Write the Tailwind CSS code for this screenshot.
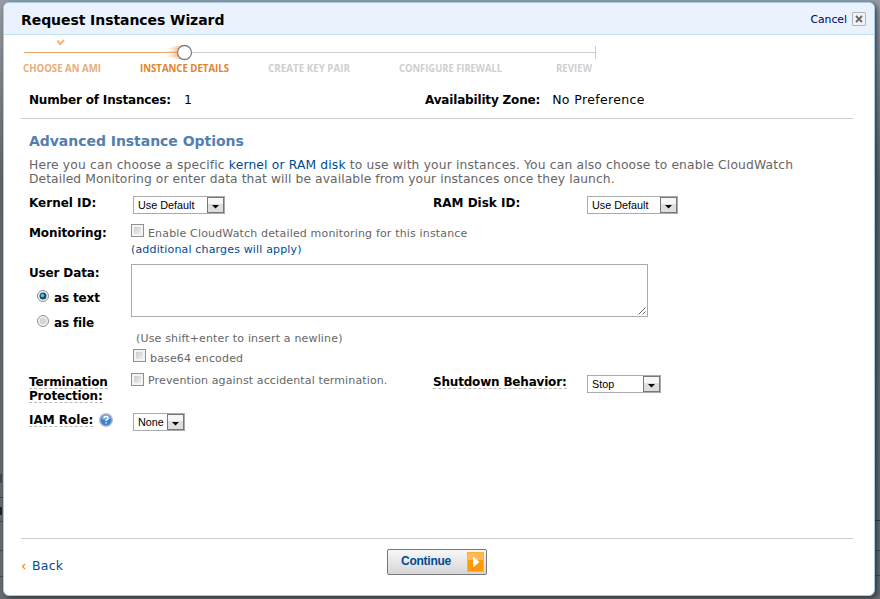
<!DOCTYPE html>
<html lang="en">
<head>
<meta charset="utf-8">
<title>Request Instances Wizard</title>
<script src="https://cdn.jsdelivr.net/npm/@tailwindcss/browser@4"></script>
</head>
<body class="w-[880px] h-[599px] overflow-hidden bg-linear-to-b from-[#969ca3] via-[#60656a] via-30% to-[#666c71] font-['DejaVu_Sans',Verdana,sans-serif] text-[12px] text-[#666] pt-[2px] pl-[3px] relative">
<!-- page behind the dialog -->
<div class="absolute left-0 top-[474px] w-[3px] overflow-hidden"><div class="h-[9px] w-[2px] bg-[#44484c]"></div><div class="mt-[14px] h-px bg-[#3c4043]"></div><div class="mt-[9px] h-[8px] w-[2px] bg-[#202224]"></div><div class="mt-[6px] h-px bg-[#45494c]"></div><div class="mt-[28px] h-px bg-[#45494c]"></div><div class="mt-[25px] h-px bg-[#45494c]"></div></div>
<div class="absolute left-[875px] top-[520px] w-[5px]"><div class="h-px bg-[#34383b]"></div><div class="mt-[29px] h-px bg-[#45494c]"></div><div class="mt-[24px] h-px bg-[#45494c]"></div></div>

<main class="relative w-[872px] h-[594px] border border-[#a3cdea] rounded-[6px] bg-white shadow-[2px_2px_5px_rgba(30,35,40,0.75)] overflow-visible">
  <header class="h-[32px] bg-[#eaf2fe] border-b border-[#c5e2f1] rounded-t-[5px] flex items-center justify-between pl-[17px] pr-[8px]">
    <h1 class="pt-[3px] text-[14px] tracking-[-0.07px] font-bold text-black whitespace-nowrap">Request Instances Wizard</h1>
    <div class="flex items-center gap-[5px] text-[10.8px] text-[#006]"><span class="pt-[3px]">Cancel</span>
      <svg width="14" height="14" viewBox="0 0 14 14"><rect x=".5" y=".5" width="13" height="13" rx=".5" fill="#f3f3f3" stroke="#b4b4b4"/><path d="M4 4l6 6M10 4l-6 6" stroke="#666" stroke-width="1.8"/></svg>
    </div>
  </header>

  <nav class="h-[50px]">
    <svg class="block" width="872" height="50" viewBox="4 35 872 50" font-family="'Open Sans','Noto Sans',sans-serif" font-weight="700" font-size="10.5">
      <defs><linearGradient id="trail"><stop offset="0" stop-color="#f5b983" stop-opacity="0"/><stop offset="1" stop-color="#f2a663" stop-opacity=".8"/></linearGradient></defs>
      <path d="M57.500 40.500l2.500 3.500 4-4" fill="none" stroke="#f2b784" stroke-width="2.200"/>
      <path d="M24 52.500H180" stroke="#e8a76b"/>
      <path d="M190 52.500H595M595.500 46V59" stroke="#ccc" fill="none"/>
      <rect x="170" y="46" width="12" height="2" fill="url(#trail)"/>
      <rect x="166" y="48" width="14" height="1" fill="url(#trail)"/>
      <rect x="169" y="49" width="10" height="2" fill="url(#trail)"/>
      <rect x="164" y="51" width="14" height="2" fill="url(#trail)"/>
      <rect x="168" y="53" width="11" height="2" fill="url(#trail)"/>
      <rect x="165" y="55" width="14" height="2" fill="url(#trail)"/>
      <rect x="171" y="57" width="11" height="2" fill="url(#trail)"/>
      <circle cx="184.500" cy="52.500" r="7" fill="#fff" stroke="#808080" stroke-width="1.300"/>
      <text x="23" y="72" fill="#e8ad78" textLength="78" lengthAdjust="spacingAndGlyphs">CHOOSE AN AMI</text>
      <text x="140" y="72" fill="#e2832b" textLength="89" lengthAdjust="spacingAndGlyphs">INSTANCE DETAILS</text>
      <text x="268" y="72" fill="#cfcfcf" textLength="82" lengthAdjust="spacingAndGlyphs">CREATE KEY PAIR</text>
      <text x="399" y="72" fill="#cfcfcf" textLength="103" lengthAdjust="spacingAndGlyphs">CONFIGURE FIREWALL</text>
      <text x="556" y="72" fill="#cfcfcf" textLength="36" lengthAdjust="spacingAndGlyphs">REVIEW</text>
    </svg>
  </nav>

  <section class="ml-[17px] mr-[21px] h-[34px] border-b border-[#ccc] pl-[8px] pt-[7px] grid grid-cols-[396px_1fr] leading-[16px] text-black">
    <div class="flex gap-[13px]"><b class="tracking-[-0.17px]">Number of Instances:</b><span class="text-[12.5px]">1</span></div>
    <div class="flex gap-[12px]"><b class="tracking-[-0.17px]">Availability Zone:</b><span class="text-[12.5px] tracking-[0.37px]">No Preference</span></div>
  </section>

  <section class="h-[420px] ml-[17px] mr-[21px] pl-[8px] border-b border-[#ccc]">
    <h2 class="pt-[12px] h-[39px] text-[14px] leading-[20px] font-bold text-[#527fb0] tracking-[-0.04px]">Advanced Instance Options</h2>
    <p class="h-[30px] leading-[14px] whitespace-nowrap text-[12.3px] tracking-[0.16px]">Here you can choose a specific <a class="text-[#004b91]">kernel or RAM disk</a> to use with your instances. You can also choose to enable CloudWatch<br><span class="tracking-[0.08px]">Detailed Monitoring or enter data that will be available from your instances once they launch.</span></p>

    <div class="h-[30px] pt-[7px] grid grid-cols-[104px_300px_154px_1fr] leading-[16px]">
      <b class="text-black">Kernel ID:</b>
      <div class="mt-[1px] w-[92px] h-[18px] border border-[#aaa] bg-white flex items-center justify-between pl-[4px] font-['Liberation_Sans',Arial,sans-serif] text-[10.8px] text-black"><span>Use Default</span><svg width="17" height="16" viewBox="0 0 17 16"><rect x=".5" y=".5" width="16" height="15" fill="#dedede" stroke="#777"/><rect x="1" y="1" width="15" height="6" fill="#f6f6f6"/><path d="M5 8h7L8.500 11.500z" fill="#000"/></svg></div>
      <b class="text-black">RAM Disk ID:</b>
      <div class="mt-[1px] w-[91px] h-[18px] border border-[#aaa] bg-white flex items-center justify-between pl-[4px] font-['Liberation_Sans',Arial,sans-serif] text-[10.8px] text-black"><span>Use Default</span><svg width="17" height="16" viewBox="0 0 17 16"><rect x=".5" y=".5" width="16" height="15" fill="#dedede" stroke="#777"/><rect x="1" y="1" width="15" height="6" fill="#f6f6f6"/><path d="M5 8h7L8.500 11.500z" fill="#000"/></svg></div>
    </div>

    <div class="h-[46px] pt-[7px] grid grid-cols-[102px_1fr] leading-[16px]">
      <b class="text-black tracking-[-0.1px]">Monitoring:</b>
      <div class="text-[11px] tracking-[0.16px] pt-px">
        <div class="flex gap-[4px]"><i class="block mt-[-2px] size-[13px] border border-[#8e8f8f] bg-linear-to-br from-[#bfc3c8] to-[#f8f8f8] shadow-[inset_0_0_0_2px_#f4f4f4]"></i><span>Enable CloudWatch detailed monitoring for this instance</span></div>
        <a class="block text-[#004b91]">(additional charges will apply)</a>
      </div>
    </div>

    <div class="h-[109px] grid grid-cols-[102px_1fr]">
      <div class="text-black font-bold leading-[16px] pt-px tracking-[-0.15px]">
        <div>User Data:</div>
        <div class="flex gap-[5px] pl-[8px] mt-[9px]"><svg width="12" height="12" viewBox="0 0 12 12"><circle cx="6" cy="6" r="5.500" fill="#f2f2f2" stroke="#8e8f8f"/><circle cx="6" cy="6" r="3.500" fill="#174d70"/><circle cx="5.500" cy="5.500" r="1.700" fill="#5fc1e8"/></svg><span>as text</span></div>
        <div class="flex gap-[5px] pl-[8px] mt-[9px]"><svg width="12" height="12" viewBox="0 0 12 12"><circle cx="6" cy="6" r="5.500" fill="#f2f2f2" stroke="#8e8f8f"/><circle cx="6" cy="6" r="3.500" fill="#d5d6d8"/></svg><span>as file</span></div>
      </div>
      <div class="text-[11px] leading-[16px] tracking-[0.16px]">
        <div class="w-[517px] h-[53px] border border-[#a9a9b1] bg-white flex items-end justify-end"><svg width="9" height="9" viewBox="0 0 9 9"><path d="M0.500 7.500L7.500 .5M4.500 7.500l3-3" stroke="#666" fill="none"/></svg></div>
        <div class="mt-[14px] pl-[5px]">(Use shift+enter to insert a newline)</div>
        <div class="mt-[4px] pl-[2px] flex gap-[4px]"><i class="block mt-[-2px] size-[13px] border border-[#8e8f8f] bg-linear-to-br from-[#bfc3c8] to-[#f8f8f8] shadow-[inset_0_0_0_2px_#f4f4f4]"></i><span>base64 encoded</span></div>
      </div>
    </div>

    <div class="h-[39px] grid grid-cols-[102px_302px_154px_1fr]">
      <b class="text-black leading-[14px] pt-[2px] tracking-[-0.17px]"><span class="inline-block h-[14px] border-b border-dashed border-[#bbb]">Termination</span><br><span class="inline-block h-[14px] border-b border-dashed border-[#bbb]">Protection:</span></b>
      <div class="flex gap-[4px] text-[11px] leading-[16px] tracking-[0.13px]"><i class="block size-[13px] border border-[#8e8f8f] bg-linear-to-br from-[#bfc3c8] to-[#f8f8f8] shadow-[inset_0_0_0_2px_#f4f4f4]"></i><span>Prevention against accidental termination.</span></div>
      <b class="text-black leading-[14px] pt-[2px] tracking-[-0.19px]"><span class="inline-block h-[14px] border-b border-dashed border-[#bbb]">Shutdown Behavior:</span></b>
      <div class="mt-[2px] w-[74px] h-[18px] border border-[#aaa] bg-white flex items-center justify-between pl-[4px] font-['Liberation_Sans',Arial,sans-serif] text-[10.8px] text-black"><span>Stop</span><svg width="17" height="16" viewBox="0 0 17 16"><rect x=".5" y=".5" width="16" height="15" fill="#dedede" stroke="#777"/><rect x="1" y="1" width="15" height="6" fill="#f6f6f6"/><path d="M5 8h7L8.500 11.500z" fill="#000"/></svg></div>
    </div>

    <div class="grid grid-cols-[104px_1fr]">
      <div class="flex gap-[6px] text-black font-bold leading-[14px]"><span class="h-[14px] mt-[1px] border-b border-dashed border-[#bbb]">IAM Role:</span><svg class="mt-[1px]" width="14" height="14" viewBox="0 0 14 14"><circle cx="7" cy="7" r="6.300" fill="#3f83cf" stroke="#b9bec5" stroke-width="1.400"/><path d="M2 6a5 4.500 0 0 1 10 0q-5 2-10 0" fill="#8dbdf0" opacity=".6"/><path d="M5 5.200q0-1.700 2-1.700t2 1.600q0 1-1.900 2.200V8M7.100 9.200v1.400" fill="none" stroke="#fff" stroke-width="1.400"/></svg></div>
      <div class="mt-[1px] w-[52px] h-[18px] border border-[#aaa] bg-white flex items-center justify-between pl-[4px] font-['Liberation_Sans',Arial,sans-serif] text-[10.8px] text-black"><span>None</span><svg width="17" height="16" viewBox="0 0 17 16"><rect x=".5" y=".5" width="16" height="15" fill="#dedede" stroke="#777"/><rect x="1" y="1" width="15" height="6" fill="#f6f6f6"/><path d="M5 8h7L8.500 11.500z" fill="#000"/></svg></div>
    </div>
  </section>

  <footer class="pt-[10px] pl-[17px] grid grid-cols-[366px_1fr] text-[#004b91]">
    <div class="flex items-center gap-[6px] h-[34px] text-[12.500px] tracking-[0.2px]"><svg width="5" height="7" viewBox="0 0 5 7"><path d="M4 1L1.500 3.500 4 6" fill="none" stroke="#f08c1e" stroke-width="1.200"/></svg><span>Back</span></div>
    <button class="w-[100px] h-[26px] border border-[#777] rounded-[2px] bg-linear-to-b from-[#f8f8f8] to-[#d6d6d8] flex items-center justify-between pl-[13px] pr-[2px] font-['Liberation_Sans',Arial,sans-serif] font-bold text-[12px] tracking-[-0.25px]"><span class="-mt-[3px]">Continue</span><svg width="17" height="20" viewBox="0 0 17 20"><rect width="17" height="20" fill="#fd9a05"/><rect width="17" height="8" fill="#ffb95a"/><rect x=".5" y=".5" width="16" height="19" fill="none" stroke="#fbb42c"/><path d="M6 4.500l6.500 5.500L6 15.500z" fill="#fff"/></svg></button>
  </footer>
</main>
</body>
</html>
